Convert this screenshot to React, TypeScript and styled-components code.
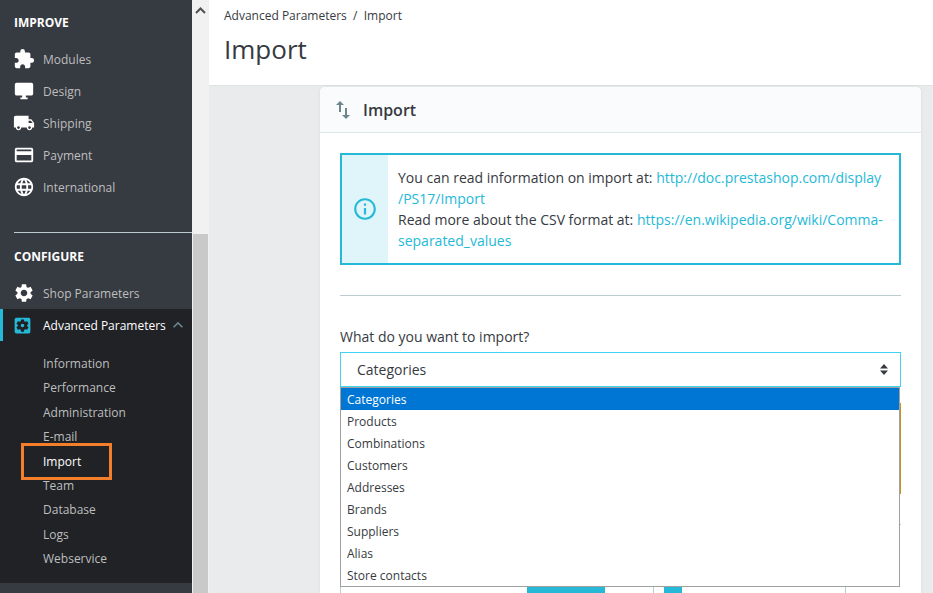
import React from 'react';
import styled, { createGlobalStyle } from 'styled-components';
import {
    MdExtension,
    MdDesktopWindows,
    MdLocalShipping,
    MdPayment,
    MdLanguage,
    MdSettings,
    MdSettingsApplications,
    MdKeyboardArrowUp,
    MdImportExport,
    MdInfoOutline,
} from 'react-icons/md';

const GlobalStyle = createGlobalStyle`
    html, body {
        margin: 0;
        padding: 0;
        height: 100%;
        overflow: hidden;
        background: #eaebec;
    }
    *, *::after {
        box-sizing: border-box;
    }
`;

const improveLinks = [
    { label: 'Modules', icon: <MdExtension /> },
    { label: 'Design', icon: <MdDesktopWindows /> },
    { label: 'Shipping', icon: <MdLocalShipping /> },
    { label: 'Payment', icon: <MdPayment /> },
    { label: 'International', icon: <MdLanguage /> },
];

const subLinks = [
    'Information',
    'Performance',
    'Administration',
    'E-mail',
    'Import',
    'Team',
    'Database',
    'Logs',
    'Webservice',
];

const options = [
    'Categories',
    'Products',
    'Combinations',
    'Customers',
    'Addresses',
    'Brands',
    'Suppliers',
    'Alias',
    'Store contacts',
];

export default function App() {
    return (
        <Page>
            <GlobalStyle />
            <Sidebar>
                <SectionTitle>IMPROVE</SectionTitle>
                {improveLinks.map((link) => (
                    <NavRow key={link.label}>
                        <NavIcon>{link.icon}</NavIcon>
                        {link.label}
                    </NavRow>
                ))}
                <SectionDivider />
                <SectionTitle>CONFIGURE</SectionTitle>
                <NavRow>
                    <NavIcon>
                        <MdSettings />
                    </NavIcon>
                    Shop Parameters
                </NavRow>
                <ActiveGroup>
                    <ActiveRow>
                        <NavIcon $active>
                            <MdSettingsApplications />
                        </NavIcon>
                        Advanced Parameters
                        <Chevron>
                            <MdKeyboardArrowUp />
                        </Chevron>
                    </ActiveRow>
                    <SubList>
                        {subLinks.map((label) => (
                            <SubRow key={label} $current={label === 'Import'}>
                                {label}
                            </SubRow>
                        ))}
                    </SubList>
                </ActiveGroup>
            </Sidebar>
            <ScrollTrack>
                <ScrollArrow>
                    <svg width="11" height="7" viewBox="0 0 11 7">
                        <path d="M1 6 L5.5 1.5 L10 6" fill="none" stroke="#505050" strokeWidth="2" />
                    </svg>
                </ScrollArrow>
                <ScrollThumb />
            </ScrollTrack>
            <Main>
                <PageHead>
                    <Breadcrumb>Advanced Parameters&nbsp;&nbsp;/&nbsp;&nbsp;Import</Breadcrumb>
                    <PageTitle>Import</PageTitle>
                </PageHead>
                <Card>
                    <CardHeader>
                        <MdImportExport />
                        Import
                    </CardHeader>
                    <CardBody>
                        <InfoAlert>
                            <InfoSide>
                                <MdInfoOutline />
                            </InfoSide>
                            <InfoText>
                                You can read information on import at:{' '}
                                <InfoLink>
                                    http://doc.prestashop.com/display
                                    <br />
                                    /PS17/Import
                                </InfoLink>
                                <br />
                                Read more about the CSV format at:{' '}
                                <InfoLink>
                                    https://en.wikipedia.org/wiki/Comma-
                                    <br />
                                    separated_values
                                </InfoLink>
                            </InfoText>
                        </InfoAlert>
                        <Divider />
                        <FieldLabel>What do you want to import?</FieldLabel>
                        <SelectWrap>
                            <SelectBox>
                                Categories
                                <SelectCaret>
                                    <svg width="8" height="11" viewBox="0 0 8 11">
                                        <path d="M4 0 L8 4.5 H0 Z M0 6.5 H8 L4 11 Z" fill="#363a41" />
                                    </svg>
                                </SelectCaret>
                            </SelectBox>
                            <OptionList>
                                {options.map((option, i) => (
                                    <OptionRow key={option} $selected={i === 0}>
                                        {option}
                                    </OptionRow>
                                ))}
                            </OptionList>
                        </SelectWrap>
                        <WarningAlert />
                        <LowerDivider />
                        <SwitchRow>
                            <SwitchCell>
                                <SwitchBar $width={78} $offset={186} />
                            </SwitchCell>
                            <SwitchCell>
                                <SwitchBar $width={18} $offset={10} />
                            </SwitchCell>
                            <SwitchCell />
                        </SwitchRow>
                    </CardBody>
                </Card>
            </Main>
        </Page>
    );
}

const Page = styled.div`
    display: grid;
    grid-template-columns: 192px 17px 724px;
    height: 593px;
    overflow: hidden;
    font-family: 'Open Sans', 'Noto Sans', sans-serif;
    color: #363a41;
`;

const Sidebar = styled.nav`
    background: #363a41;
    height: 593px;
    padding-top: 14px;
    font-size: 12px;
    color: #bebebe;
`;

const SectionTitle = styled.div`
    height: 17px;
    line-height: 17px;
    margin-left: 14px;
    margin-bottom: 12px;
    font-size: 12px;
    font-weight: 700;
    color: #fff;
`;

const NavRow = styled.div`
    display: flex;
    align-items: center;
    height: 32px;
    padding-left: 13px;
    white-space: nowrap;
`;

const NavIcon = styled.span<{ $active?: boolean }>`
    display: flex;
    align-items: center;
    justify-content: center;
    width: 22px;
    margin-right: ${(p) => (p.$active ? '10px' : '8px')};
    font-size: ${(p) => (p.$active ? '21px' : '22px')};
    color: ${(p) => (p.$active ? '#25b9d7' : '#fff')};
`;

const SectionDivider = styled.div`
    height: 1px;
    margin: 29px 0 15px 14px;
    background: #bbcdd2;
`;

const ActiveGroup = styled.div`
    background: #202226;
    height: 274px;
`;

const ActiveRow = styled(NavRow)`
    height: 32px;
    border-left: 3px solid #25b9d7;
    padding-left: 8px;
    color: #fff;
`;

const Chevron = styled.span`
    display: flex;
    margin-left: 2px;
    font-size: 20px;
    color: #6c868e;
`;

const SubList = styled.div`
    padding-top: 11px;
`;

const SubRow = styled.div<{ $current?: boolean }>`
    position: relative;
    height: 24.4px;
    line-height: 24.4px;
    padding-left: 43px;
    color: ${(p) => (p.$current ? '#fff' : '#bebebe')};

    ${(p) =>
        p.$current &&
        `
        &::after {
            content: '';
            position: absolute;
            left: 21px;
            top: -6.5px;
            width: 91px;
            height: 37px;
            border: 3px solid #f47e2a;
        }
    `}
`;

const ScrollTrack = styled.div`
    display: flex;
    flex-direction: column;
    background: #f1f1f1;
    height: 593px;
`;

const ScrollArrow = styled.div`
    display: flex;
    justify-content: center;
    padding-top: 7px;
    height: 234px;
`;

const ScrollThumb = styled.div`
    flex: 1;
    margin: 0 1px;
    background: #c9c9c9;
`;

const Main = styled.main`
    background: #eaebec;
    height: 593px;
    overflow: hidden;
`;

const PageHead = styled.header`
    height: 86px;
    padding: 8px 15px 0;
    background: #fff;
    border-bottom: 1px solid #dfe3e4;
    margin-bottom: 1px;
`;

const Breadcrumb = styled.div`
    font-size: 12px;
    line-height: 15px;
`;

const PageTitle = styled.h1`
    margin: 8px 0 0;
    font-size: 26px;
    line-height: 36px;
    font-weight: 400;
`;

const Card = styled.section`
    margin: 0 12px 0 111px;
    border-radius: 5px 5px 0 0;
    background: #fff;
    box-shadow: 0 0 4px rgba(0, 0, 0, 0.06);
`;

const CardHeader = styled.div`
    display: flex;
    align-items: center;
    gap: 8px;
    height: 46px;
    padding-left: 11px;
    background: #fafbfc;
    border-bottom: 1px solid #dbe6e9;
    border-radius: 5px 5px 0 0;
    font-size: 16px;
    font-weight: 600;

    svg {
        font-size: 24px;
        color: #6c868e;
    }
`;

const CardBody = styled.div`
    padding: 20px;
`;

const InfoAlert = styled.div`
    display: flex;
    height: 112px;
    border: 2px solid #25b9d7;
`;

const InfoSide = styled.div`
    display: flex;
    align-items: center;
    justify-content: center;
    width: 46px;
    background: #dff5f9;
    font-size: 26px;
    color: #25b9d7;
`;

const InfoText = styled.div`
    padding: 11.5px 0 0 10px;
    font-size: 14px;
    line-height: 21px;
    white-space: nowrap;
`;

const InfoLink = styled.a`
    color: #25b9d7;
`;

const Divider = styled.hr`
    margin: 30px 0;
    border: 0;
    border-top: 1px solid #bbcdd2;
`;

const FieldLabel = styled.div`
    font-size: 14px;
    line-height: 21px;
    margin-bottom: 5px;
`;

const SelectWrap = styled.div`
    position: relative;
`;

const SelectBox = styled.div`
    display: flex;
    align-items: center;
    justify-content: space-between;
    height: 35px;
    padding: 0 12px 0 16px;
    background: #fff;
    border: 1px solid #40d4f0;
    font-size: 14px;
`;

const SelectCaret = styled.span`
    display: flex;
`;

const OptionList = styled.div`
    position: absolute;
    z-index: 2;
    left: 0;
    top: 35px;
    width: 560px;
    height: 200px;
    background: #fff;
    border: 1px solid #a0a0a0;
    font-size: 12px;
`;

const OptionRow = styled.div<{ $selected?: boolean }>`
    height: 22px;
    line-height: 24px;
    padding-left: 6px;
    background: ${(p) => (p.$selected ? '#0076d4' : 'transparent')};
    color: ${(p) => (p.$selected ? '#fff' : '#363a41')};
`;

const WarningAlert = styled.div`
    height: 91px;
    margin-top: 16px;
    border: 2px solid #cd9321;
`;

const LowerDivider = styled.hr`
    margin: 30px 0 0;
    border: 0;
    border-top: 1px solid #bbcdd2;
`;

const SwitchRow = styled.div`
    display: grid;
    grid-template-columns: 313px 192px 56px;
    height: 40px;
    margin-top: 62px;
    border-left: 1px solid #bbcdd2;
`;

const SwitchCell = styled.div`
    border-right: 1px solid #bbcdd2;

    &:last-child {
        border-right: 0;
    }
`;

const SwitchBar = styled.div<{ $width: number; $offset: number }>`
    width: ${(p) => p.$width}px;
    height: 30px;
    margin-left: ${(p) => p.$offset}px;
    background: #25b9d7;
`;
